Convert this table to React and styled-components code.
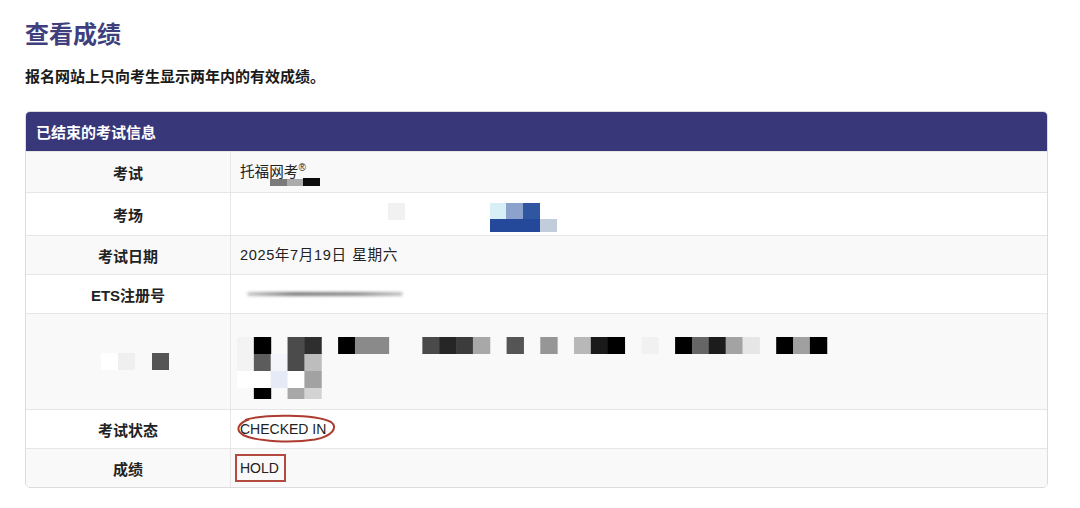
import React from "react";
import styled, { createGlobalStyle } from "styled-components";

const GlobalStyle = createGlobalStyle`
    body {
        margin: 0;
        background: #fff;
        font-family: "Liberation Sans", "Noto Sans CJK SC", sans-serif;
        color: #222;
    }
`;

const Page = styled.div`
    padding: 21px 32px 0 25px;
`;

const Title = styled.h1`
    margin: 0;
    font-size: 24px;
    line-height: 28px;
    font-weight: bold;
    color: #403f7e;
`;

const Subtitle = styled.p`
    margin: 18px 0 0 0;
    font-size: 15px;
    line-height: 20px;
    font-weight: bold;
    color: #1a1a1a;
`;

const Card = styled.div`
    margin-top: 24px;
    border: 1px solid #dcdce0;
    border-radius: 5px;
    overflow: hidden;
`;

const Header = styled.div`
    height: 39px;
    display: flex;
    align-items: center;
    padding-left: 10px;
    background: #37377a;
    color: #fff;
    font-size: 15px;
    font-weight: bold;
`;

const Rows = styled.div``;

const Row = styled.div`
    display: grid;
    grid-template-columns: 205px 1fr;
    box-sizing: border-box;
    height: ${props => props.$h || 39}px;
    border-top: 1px solid #e6e6e6;
    background: #fff;
    &:nth-child(odd) {
        background: #f9f9f9;
    }
`;

const Label = styled.div`
    display: flex;
    align-items: center;
    justify-content: center;
    border-right: 1px solid #e6e6e6;
    font-size: 15px;
    font-weight: bold;
    color: #222;
`;

const Value = styled.div`
    display: flex;
    align-items: ${props => (props.$top ? "flex-start" : "center")};
    padding: ${props => (props.$top ? `${props.$top}px` : "0")} 9px 0 9px;
    font-size: 14.6px;
    line-height: 20px;
    color: #222;
`;

const DateText = styled.span`
    letter-spacing: 0.6px;
    word-spacing: 1px;
`;

const Marked = styled.span`
    position: relative;
    display: inline-block;
    sup {
        font-size: 10px;
        line-height: 0;
        vertical-align: 6px;
    }
`;

const Overlay = styled.svg`
    position: absolute;
    left: ${props => props.$x}px;
    top: ${props => props.$y}px;
    overflow: visible;
    pointer-events: none;
`;

const Smudge = styled.div`
    width: 156px;
    height: 4px;
    margin-left: 7px;
    border-radius: 2px;
    background: linear-gradient(to right, #c8c8c8, #7c7c7c 30%, #8c8c8c 70%, #c4c4c4);
    filter: blur(1.6px);
`;

const BoxedText = styled.span`
    display: inline-block;
    margin-left: -5px;
    padding: 2px 5px 2px 3px;
    border: 2px solid #b24a40;
    font-size: 14px;
    line-height: 20px;
`;

const LatinText = styled.span`
    font-size: 14px;
`;

const MosaicSvg = styled.svg`
    display: block;
    flex-shrink: 0;
    margin-left: ${props => props.$ml || 0}px;
    overflow: visible;
`;

const Mosaic = ({ cells, width, height, cw = 17, ch = 17, ml }) => (
    <MosaicSvg width={width} height={height} $ml={ml}>
        {cells.map(([c, r, color, w = 1, h = ch], i) => (
            <rect key={i} x={c * cw} y={r * ch} width={w * cw + 0.5} height={h} fill={color} />
        ))}
    </MosaicSvg>
);

const nameCells = [
    [0, 0, "#f3f3f3"], [1, 0, "#000"], [3, 0, "#4b4b4b"], [4, 0, "#2e2e2e"],
    [6, 0, "#000"], [7, 0, "#8a8a8a", 2], [11, 0, "#4a4a4a"], [12, 0, "#262626"],
    [13, 0, "#3c3c3c"], [14, 0, "#a8a8a8"], [16, 0, "#555"], [18, 0, "#969696"],
    [20, 0, "#b8b8b8"], [21, 0, "#1a1a1a"], [22, 0, "#000"], [24, 0, "#f1f1f1"],
    [26, 0, "#000"], [27, 0, "#666"], [28, 0, "#1c1c1c"], [29, 0, "#a3a3a3"],
    [30, 0, "#e6e6e6"], [32, 0, "#000"], [33, 0, "#a0a0a0"], [34, 0, "#000"],
    [0, 1, "#f3f3f3"], [1, 1, "#5c5c5c"], [2, 1, "#f4f5fa"], [3, 1, "#4b4b4b"], [4, 1, "#bdbdbd"],
    [0, 2, "#fff"], [1, 2, "#fff"], [2, 2, "#e6e9f6"], [3, 2, "#fff"], [4, 2, "#a2a2a2"],
    [1, 3, "#000", 1, 11], [3, 3, "#a8a8a8", 1, 11], [4, 3, "#d3d3d3", 1, 11],
];

const labelCells = [
    [0, 0, "#fff"], [1, 0, "#efefef"], [3, 0, "#555"],
];

export default function App() {
    return (
        <Page>
            <GlobalStyle />
            <Title>查看成绩</Title>
            <Subtitle>报名网站上只向考生显示两年内的有效成绩。</Subtitle>
            <Card>
                <Header>已结束的考试信息</Header>
                <Rows>
                    <Row $h={41}>
                        <Label>考试</Label>
                        <Value>
                            <Marked>
                                托福网考<sup>®</sup>
                                <Overlay $x={30} $y={17} width="50" height="7">
                                    <rect x="0" y="0" width="17" height="7" fill="#7a7a7a" />
                                    <rect x="17" y="0" width="16" height="7" fill="#ababab" />
                                    <rect x="33" y="-1" width="17" height="8" fill="#0c0c0c" />
                                </Overlay>
                            </Marked>
                        </Value>
                    </Row>
                    <Row $h={43}>
                        <Label>考场</Label>
                        <Value $top={10}>
                            <MosaicSvg width="320" height="30">
                                <rect x="148" y="0" width="17" height="17" fill="#f1f1f1" />
                                <rect x="250" y="0" width="17" height="16" fill="#d8eff7" />
                                <rect x="266" y="0" width="17" height="16" fill="#8aa2cc" />
                                <rect x="283" y="0" width="17" height="16" fill="#2f56a0" />
                                <rect x="250" y="16" width="50" height="13" fill="#24489a" />
                                <rect x="300" y="16" width="17" height="13" fill="#c2cddc" />
                            </MosaicSvg>
                        </Value>
                    </Row>
                    <Row>
                        <Label>考试日期</Label>
                        <Value>
                            <DateText>2025年7月19日 星期六</DateText>
                        </Value>
                    </Row>
                    <Row>
                        <Label>ETS注册号</Label>
                        <Value>
                            <Smudge />
                        </Value>
                    </Row>
                    <Row $h={96}>
                        <Label>
                            <MosaicSvg width="205" height="17">
                                {labelCells.map(([c, r, color], i) => (
                                    <rect key={i} x={75 + c * 17} y={r * 17} width="17" height="17" fill={color} />
                                ))}
                            </MosaicSvg>
                        </Label>
                        <Value $top={23}>
                            <Mosaic cells={nameCells} width="595" height="62" cw={16.85} ml={-3} />
                        </Value>
                    </Row>
                    <Row>
                        <Label>考试状态</Label>
                        <Value>
                            <Marked>
                                <LatinText>CHECKED IN</LatinText>
                                <Overlay $x={-3} $y={-4} width="99" height="27" viewBox="0 0 99 27">
                                    <path
                                        d="M8 5 C 26 -1, 78 -1, 94 7 C 101 12, 96 21, 78 24.5 C 56 28, 20 27, 6 20 C -2 15, 1 8, 12 4.5"
                                        fill="none"
                                        stroke="#ad3b30"
                                        strokeWidth="2"
                                    />
                                </Overlay>
                            </Marked>
                        </Value>
                    </Row>
                    <Row>
                        <Label>成绩</Label>
                        <Value>
                            <BoxedText>HOLD</BoxedText>
                        </Value>
                    </Row>
                </Rows>
            </Card>
        </Page>
    );
}
